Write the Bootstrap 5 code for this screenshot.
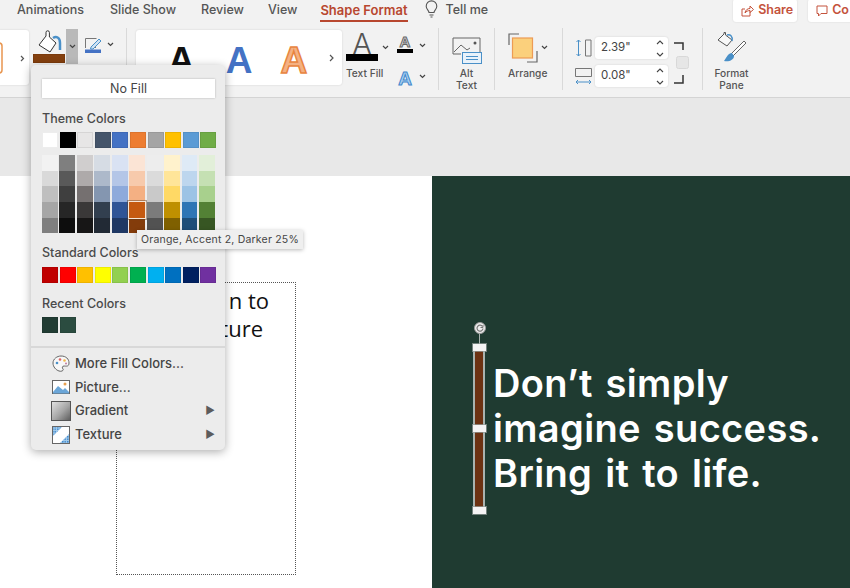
<!DOCTYPE html>
<html lang="en">
<head>
  <meta charset="UTF-8" />
  <title>Shape Format</title>
  <link href="https://cdn.jsdelivr.net/npm/bootstrap@5.3.0/dist/css/bootstrap.min.css" rel="stylesheet">
  <style>
    html, body { height: 100%; }
    body { background: #fff; font-family: "Inter", "Liberation Sans", sans-serif; color: #4a4a4a; overflow: hidden; }
    .app-shell { width: 850px; height: 588px; position: relative; overflow: hidden; }

    .top-chrome { background: #f2f2f2; height: 98px; border-bottom: 1px solid #d4d4d4; }
    .tab-row { height: 24px; font-size: 12.5px; font-weight: 500; color: #555; }
    .tab-row > * { flex-shrink: 0; }
    .tab-item { white-space: nowrap; line-height: 20px; }
    .tab-animations { margin-left: 17px; }
    .tab-slideshow { margin-left: 26px; }
    .tab-review { margin-left: 25px; }
    .tab-view { margin-left: 24px; }
    .tab-active { color: #b8472f; font-weight: 600; font-size: 13px; border-bottom: 2px solid #b8472f; height: 22px; margin-left: 23px; }
    .tab-bulb { margin-left: 17px; }
    .top-btn { background: #fff; color: #c4533c; font-weight: 600; font-size: 12.5px; height: 23px; border-radius: 3px; margin-top: -1px; box-shadow: 0 0 2px rgba(0,0,0,.12); padding-left: 8px; white-space: nowrap; }
    .top-btn svg { flex: none; }
    .btn-share { margin-left: 245px; width: 64px; }
    .btn-comment { margin-left: 11px; width: 60px; overflow: hidden; }

    .ribbon-row { height: 73px; position: relative; }
    .ribbon-row > * { flex-shrink: 0; }
    .rb-gallery { background: #fff; height: 55px; margin-top: 6px; border-radius: 3px; box-shadow: 0 0 2px rgba(0,0,0,.15); overflow: hidden; }
    .rb-gallery-a { width: 32px; margin-left: -3px; }
    .rb-gallery-b { width: 206px; margin-left: 9px; }
    .rb-sep { width: 1px; height: 62px; margin-top: 4px; background: #d9d9d9; }
    .rb-sep-pen { margin-left: 8px; }
    .rb-sep-lock { margin-left: 9px; }
    .rb-label { font-size: 10.2px; line-height: 12px; color: #555; font-weight: 500; text-align: center; }
    .rb-bucket { margin: 6px 0 0 4px; }
    .rb-split { width: 12px; height: 35px; margin-top: 5px; background: #b9b9b9; }
    .rb-pen { margin: 13px 0 0 6px; }
    .rb-input { width: 73px; height: 22px; background: #fff; border-radius: 3px; font-size: 11.5px; color: #444; padding-left: 6px; box-shadow: 0 0 2px rgba(0,0,0,.15); }
    .wordart { font-size: 37px; font-weight: 700; line-height: 1; font-family: "Liberation Sans", sans-serif; padding-top: 6px; }
    .wordart-a { margin-left: 32px; color: #111; }
    .wordart-b { margin-left: 31px; color: #4472c4; }
    .wordart-c { margin-left: 28px; color: #f4b183; -webkit-text-stroke: 1.5px #e8853f; }

    .text-fill { width: 32px; margin-left: 4px; }
    .text-fill-glyph { height: 25px; margin-top: 5px; font-size: 29px; line-height: 30px; color: #555; font-weight: 300; text-align: center; }
    .text-fill-bar { height: 7px; background: #000; }
    .text-fill-label { margin-top: 6px; white-space: nowrap; }
    .text-side { width: 60px; position: relative; }
    .side-chevron { position: absolute; }
    .chev-a { left: 4px; top: 21px; }
    .chev-b { left: 41px; top: 19px; }
    .chev-c { left: 41px; top: 50px; }
    .side-a { position: absolute; left: 19px; width: 16px; text-align: center; font-family: "Liberation Sans", sans-serif; font-weight: 700; line-height: 1; }
    .side-a-outline { top: 10px; font-size: 15px; color: #ddd; -webkit-text-stroke: 1px #666; }
    .side-a-bar { position: absolute; left: 19px; top: 25px; width: 16px; height: 4px; background: #000; }
    .side-a-blue { top: 45px; font-size: 19px; color: #a9d0f0; -webkit-text-stroke: 1px #3f87cc; }

    .alt-group { width: 55px; }
    .alt-icon { margin: 13px 0 0 13px; }
    .alt-label { margin-top: 3px; }
    .arrange-group { width: 67px; padding-left: 13px; }
    .arrange-icon { margin-top: 9px; }
    .arrange-label { margin-top: 4px; text-align: left; }
    .size-group { padding-left: 12px; margin-top: 13px; gap: 6px; }
    .size-row { gap: 3px; }
    .lock-icon { margin: 18px 0 0 5px; }
    .format-group { width: 57px; }
    .format-icon { margin: 8px 0 0 14px; }
    .format-label { margin-top: 3px; }

    .band { height: 78px; background: #e8e8e8; }
    .stage { height: 412px; }
    .stage-left { width: 432px; flex: none; background: #fff; }
    .stage-right { background: #1f3b31; position: relative; }
    .text-box { width: 180px; height: 293px; margin: 106px 0 0 116px; border: 1px dotted #555; color: #111; font-size: 22px; line-height: 28px; text-align: right; padding: 3px 26px 0 0; font-family: "Open Sans", sans-serif; }
    .text-box div + div { padding-right: 6px; }
    .slide-quote { color: #fff; font-size: 38px; line-height: 45px; font-weight: 600; padding: 185px 0 0 61px; white-space: nowrap; letter-spacing: .35px; word-spacing: 3px; }
    .bar-line { position: absolute; left: 41px; top: 170px; width: 12px; height: 164px; background: #6c3212; border: 2px solid #a9b3af; }
    .bar-stem { position: absolute; left: 47px; top: 156px; width: 1px; height: 14px; background: #aab4b0; }
    .bar-grip { position: absolute; left: 41px; width: 13px; height: 7px; background: #f4f4f4; box-shadow: 0 0 0 1px rgba(150,160,156,.7); }
    .grip-top { top: 168px; }
    .grip-mid { top: 249px; }
    .grip-bottom { top: 331px; }
    .bar-rotate { position: absolute; left: 42px; top: 146px; }

    .fill-menu { position: absolute; left: 31px; top: 65px; width: 194px; height: 385px; background: #ececec; border-radius: 5px; box-shadow: 0 2px 10px rgba(0,0,0,.32); padding: 14px 10px 0 11px; color: #444; font-size: 12.5px; z-index: 5; }
    .no-fill { height: 19px; width: 173px; background: #fff; text-align: center; line-height: 19px; box-shadow: 0 0 2px rgba(0,0,0,.25); }
    .menu-head { line-height: 16px; font-weight: 500; color: #4a4a4a; }
    .head-theme { margin-top: 13px; }
    .head-standard { margin-top: 12px; }
    .head-recent { margin-top: 13px; }
    .swatch-row { display: flex; gap: 1.6px; margin-top: 6px; }
    .swatch-tight { margin-top: 5px; }
    .swatch { width: 16px; height: 16px; flex: none; box-shadow: inset 0 0 0 1px rgba(0,0,0,.07); }
    .shade-grid { display: flex; gap: 1.6px; margin-top: 7px; }
    .shade-col { width: 16px; }
    .shade { height: 15.7px; }
    .shade-on { position: relative; outline: 1px solid #f5e6d8; z-index: 1; box-shadow: 0 0 0 2px rgba(90,60,30,.45); }
    .menu-rule { height: 2px; background: #d8d8d8; margin: 13px -10px 0 -11px; }
    .menu-list { margin-top: 4px; }
    .menu-item { height: 23.5px; display: flex; align-items: center; font-size: 13px; font-weight: 500; padding-left: 10px; position: relative; }
    .menu-item svg { flex: none; margin-right: 5px; }
    .menu-item svg.icon-wide { margin-left: -1px; margin-right: 4px; }
    .menu-caret { margin-left: auto; color: #5c5c5c; font-size: 10.5px; }

    .color-tip { position: absolute; left: 137px; top: 230px; width: 166px; height: 19px; background: #efefef; font-size: 10.5px; line-height: 19px; text-align: center; color: #444; box-shadow: 0 1px 4px rgba(0,0,0,.28); z-index: 6; white-space: nowrap; letter-spacing: .2px; }
  </style>
</head>
<body>
<div class="app-shell">
  <div class="top-chrome">
    <div class="tab-row d-flex">
      <span class="tab-item tab-animations">Animations</span>
      <span class="tab-item tab-slideshow">Slide Show</span>
      <span class="tab-item tab-review">Review</span>
      <span class="tab-item tab-view">View</span>
      <span class="tab-item tab-active">Shape Format</span>
      <svg class="tab-bulb" width="13" height="18" viewBox="0 0 13 18" fill="none" stroke="#555" stroke-width="1.1"><path d="M4 12.500c0-2-2.800-3-2.800-6.300a5.300 5.300 0 0 1 10.600 0c0 3.300-2.800 4.300-2.800 6.300z"/><path d="M4.500 15h4M5.500 17h2"/></svg>
      <span class="tab-item ms-2">Tell me</span>
      <span class="top-btn btn-share d-flex align-items-center gap-1">
        <svg width="13" height="12" viewBox="0 0 13 12" fill="none" stroke="#c4533c" stroke-width="1"><path d="M9 6.500V11H1V4h3M4 8c.4-3 2.500-4.500 5-4.500V1l3.500 3.500L9 7.500V5.500C7 5.500 5 6.500 4 8z"/></svg>Share
      </span>
      <span class="top-btn btn-comment d-flex align-items-center gap-1">
        <svg width="12" height="12" viewBox="0 0 12 12" fill="none" stroke="#c4533c" stroke-width="1"><path d="M1 1h10v7.500H5L2.500 11V8.500H1z"/></svg>Co
      </span>
    </div>
    <div class="ribbon-row d-flex">
      <div class="rb-gallery rb-gallery-a">
        <svg width="32" height="55" viewBox="0 0 32 55" fill="none"><rect x="-10" y="13" width="15" height="30" rx="3" stroke="#e8954f" stroke-width="1.500"/><path d="M24 26l2.500 2.500L24 31" stroke="#555" stroke-width="1.200"/></svg>
      </div>
      <!-- fill bucket -->
      <svg class="rb-bucket" width="33" height="34" viewBox="0 0 33 34" fill="none">
        <path d="M6 15l7-9V2.500a1.700 1.700 0 0 1 3.400 0V7L23 13l-6 9z" fill="#fff" stroke="#333" stroke-width="1"/>
        <path d="M20 8c3-2 7-1 7 5v7" stroke="#4a90c8" stroke-width="2.500"/>
        <rect x=".5" y="24.500" width="31" height="8" fill="#84400f" stroke="#7a3a0c"/>
      </svg>
      <div class="rb-split d-flex align-items-center justify-content-center">
        <svg width="7" height="5" viewBox="0 0 7 5" fill="none" stroke="#444" stroke-width="1.200"><path d="M1 1l2.500 2.500L6 1"/></svg>
      </div>
      <svg class="rb-pen" width="34" height="17" viewBox="0 0 34 17" fill="none">
        <path d="M1.500 11V1.500h11M12 10.500H8" stroke="#777"/>
        <path d="M7 10l8-8 2 2-8 8H6.500z" fill="#cfe2f3" stroke="#4a90c8"/>
        <rect x="1" y="12.500" width="16" height="3.500" fill="#4472c4"/>
        <path d="M24 6l2.500 2.500L29 6" stroke="#444" stroke-width="1.200"/>
      </svg>
      <div class="rb-sep rb-sep-pen"></div>
      <div class="rb-gallery rb-gallery-b d-flex align-items-center">
        <span class="wordart wordart-a">A</span>
        <span class="wordart wordart-b">A</span>
        <span class="wordart wordart-c">A</span>
        <svg class="ms-auto me-2" width="5" height="8" viewBox="0 0 5 8" fill="none" stroke="#555" stroke-width="1.200"><path d="M1 1l3 3-3 3"/></svg>
      </div>
      <div class="text-fill">
        <div class="text-fill-glyph">A</div>
        <div class="text-fill-bar"></div>
        <div class="rb-label text-fill-label">Text Fill</div>
      </div>
      <div class="text-side">
        <svg class="side-chevron chev-a" width="7" height="5" viewBox="0 0 7 5" fill="none" stroke="#444" stroke-width="1.200"><path d="M1 1l2.500 2.500L6 1"/></svg>
        <span class="side-a side-a-outline">A</span>
        <span class="side-a-bar"></span>
        <svg class="side-chevron chev-b" width="7" height="5" viewBox="0 0 7 5" fill="none" stroke="#444" stroke-width="1.200"><path d="M1 1l2.500 2.500L6 1"/></svg>
        <span class="side-a side-a-blue">A</span>
        <svg class="side-chevron chev-c" width="7" height="5" viewBox="0 0 7 5" fill="none" stroke="#444" stroke-width="1.200"><path d="M1 1l2.500 2.500L6 1"/></svg>
      </div>
      <div class="rb-sep"></div>
      <div class="alt-group">
        <svg class="alt-icon d-block" width="31" height="27" viewBox="0 0 31 27" fill="none">
          <path d="M9 17H1V1h27v15" stroke="#666"/>
          <path d="M2 15l7-7 6 5 3-2" stroke="#666"/><circle cx="23" cy="6" r="1.500" fill="#555"/>
          <rect x="10.500" y="15.500" width="19" height="11" fill="#e9f2fa" stroke="#4a90c8"/>
          <path d="M14 19.500h12M14 22.500h12" stroke="#4a90c8"/>
        </svg>
        <div class="rb-label alt-label">Alt<br>Text</div>
      </div>
      <div class="rb-sep"></div>
      <div class="arrange-group">
        <svg class="arrange-icon d-block" width="42" height="30" viewBox="0 0 42 30" fill="none">
          <path d="M1 12V1h10M29 18v11H19" stroke="#666" stroke-width="1.200"/>
          <rect x="4.500" y="5" width="20" height="20" fill="#fbd07c" stroke="#ed9b54" stroke-width="1.200"/>
          <path d="M34 13l2.500 2.500L39 13" stroke="#444" stroke-width="1.200"/>
        </svg>
        <div class="rb-label arrange-label">Arrange</div>
      </div>
      <div class="rb-sep"></div>
      <div class="size-group d-flex flex-column">
        <div class="size-row d-flex align-items-center">
          <svg width="17" height="18" viewBox="0 0 17 18" fill="none"><path d="M3.500 1v16M1.500 3l2-2 2 2M1.500 15l2 2 2-2" stroke="#4a90c8"/><path d="M10.500 1h5.500v16h-5.500z" stroke="#777"/></svg>
          <div class="rb-input d-flex align-items-center justify-content-between">2.39"<svg class="me-1" width="8" height="19" viewBox="0 0 8 19" fill="none" stroke="#444" stroke-width="1.100"><path d="M1 5l3-3 3 3M1 14l3 3 3-3"/></svg></div>
        </div>
        <div class="size-row d-flex align-items-center">
          <svg width="17" height="18" viewBox="0 0 17 18" fill="none"><path d="M.5 1.500h16v8H.5z" stroke="#777"/><path d="M1 15h15M3 13l-2 2 2 2M14 13l2 2-2 2" stroke="#4a90c8"/></svg>
          <div class="rb-input d-flex align-items-center justify-content-between">0.08"<svg class="me-1" width="8" height="19" viewBox="0 0 8 19" fill="none" stroke="#444" stroke-width="1.100"><path d="M1 5l3-3 3 3M1 14l3 3 3-3"/></svg></div>
        </div>
      </div>
      <svg class="lock-icon" width="20" height="42" viewBox="0 0 20 42" fill="none">
        <path d="M1 1h9v7M10 33v8H1" stroke="#333" stroke-width="1.500"/>
        <rect x="3.500" y="14.500" width="12" height="12" rx="2" fill="#e6e6e6" stroke="#d8d8d8"/>
      </svg>
      <div class="rb-sep rb-sep-lock"></div>
      <div class="format-group">
        <svg class="format-icon d-block" width="32" height="32" viewBox="0 0 32 32" fill="none">
          <path d="M1 8l6-6V0.500h1.500V3L15 8l-5 6z" stroke="#555" fill="#f8f8f8"/>
          <path d="M10 3c3-1 6 1 5 6" stroke="#4a90c8" stroke-width="1.500"/>
          <path d="M29 11L16 24l-2-2L27 9z" fill="#fff" stroke="#666"/>
          <path d="M15 21c-4 0-5 4-8 8 5 1 10-1 10-5z" fill="#4a90c8"/>
        </svg>
        <div class="rb-label format-label">Format<br>Pane</div>
      </div>
    </div>
  </div>
  <div class="band"></div>
  <div class="stage d-flex">
    <div class="stage-left">
      <div class="text-box"><div>n to</div><div>ture</div></div>
    </div>
    <div class="stage-right flex-grow-1">
      <div class="bar-stem"></div>
      <svg class="bar-rotate" width="12" height="12" viewBox="0 0 12 12" fill="none"><circle cx="6" cy="6" r="5.500" fill="#eee" stroke="#999"/><path d="M8.500 4.500A3 3 0 1 0 9 6.500" stroke="#777" stroke-width="1.200"/><path d="M9 3v2.500H6.500" stroke="#777"/></svg>
      <div class="bar-line"></div>
      <div class="bar-grip grip-top"></div>
      <div class="bar-grip grip-mid"></div>
      <div class="bar-grip grip-bottom"></div>
      <div class="slide-quote">Don’t simply<br>imagine success.<br>Bring it to life.</div>
    </div>
  </div>

  <div class="fill-menu">
    <div class="no-fill">No Fill</div>
    <div class="menu-head head-theme">Theme Colors</div>
    <div class="swatch-row swatch-tight" id="themeRow"></div>
    <div class="shade-grid" id="shadeGrid"></div>
    <div class="menu-head head-standard">Standard Colors</div>
    <div class="swatch-row" id="standardRow"></div>
    <div class="menu-head head-recent">Recent Colors</div>
    <div class="swatch-row swatch-tight" id="recentRow"></div>
    <div class="menu-rule"></div>
    <div class="menu-list">
      <div class="menu-item">
        <svg width="18" height="18" viewBox="0 0 18 18" fill="none"><path d="M9 1c5 0 8 3 8 7s-3 3-5 3-2 2-1 3-1 3-4 2S1 12 1 8s4-7 8-7z" fill="#f7f7f7" stroke="#666"/><circle cx="5" cy="8" r="1.300" fill="#4a90c8"/><circle cx="8" cy="4.500" r="1.300" fill="#e06666"/><circle cx="12.500" cy="5.500" r="1.300" fill="#f1b84b"/><circle cx="14" cy="8.500" r="1" fill="#c27ba0"/></svg>
        More Fill Colors...
      </div>
      <div class="menu-item">
        <svg width="18" height="15" viewBox="0 0 18 15" fill="none"><rect x=".5" y=".5" width="17" height="13" fill="#fff" stroke="#666"/><path d="M1 12l5-6 5 4 2-2 4 4v1.500H1z" fill="#6ba6d8"/><circle cx="13" cy="4" r="1.500" fill="#e8a04f"/></svg>
        Picture...
      </div>
      <div class="menu-item">
        <svg class="icon-wide" width="20" height="20" viewBox="0 0 20 20"><defs><linearGradient id="gr1" x1="0" y1="0" x2="1" y2="1"><stop offset="0" stop-color="#e4e4e4"/><stop offset=".55" stop-color="#a5a5a5"/><stop offset="1" stop-color="#5a5a5a"/></linearGradient></defs><rect x=".5" y=".5" width="19" height="19" fill="url(#gr1)" stroke="#555"/></svg>
        Gradient<span class="menu-caret">▶</span>
      </div>
      <div class="menu-item">
        <svg width="18" height="18" viewBox="0 0 18 18" fill="none"><defs><pattern id="dots1" width="2.500" height="2.500" patternUnits="userSpaceOnUse"><rect width="2.500" height="2.500" fill="#a6cdec"/><rect width="1.500" height="1.500" fill="#3f87cc"/></pattern></defs><rect x=".5" y=".5" width="17" height="17" fill="#fff" stroke="#666"/><path d="M1 1h9L1 10zM17 8v9H8z" fill="url(#dots1)"/></svg>
        Texture<span class="menu-caret">▶</span>
      </div>
    </div>
  </div>
  <div class="color-tip">Orange, Accent 2, Darker 25%</div>
</div>
<script>
  const themeColors = ['#ffffff','#000000','#e7e6e6','#44546a','#4472c4','#ed7d31','#a5a5a5','#ffc000','#5b9bd5','#70ad47'];
  const standardColors = ['#c00000','#ff0000','#ffc000','#ffff00','#92d050','#00b050','#00b0f0','#0070c0','#002060','#7030a0'];
  const recentColors = ['#213c33','#2b4c40'];
  const shades = [
    ['#f2f2f2','#d9d9d9','#bfbfbf','#a6a6a6','#7f7f7f'],
    ['#7f7f7f','#595959','#3f3f3f','#262626','#0d0d0d'],
    ['#d0cece','#aeaaaa','#757070','#3a3838','#171616'],
    ['#d6dce4','#adb9ca','#8496b0','#323f4f','#222a35'],
    ['#d9e2f3','#b4c6e7','#8eaadb','#2f5496','#1f3864'],
    ['#fbe4d5','#f7caac','#f4b083','#c55a11','#833c0b'],
    ['#ededed','#dbdbdb','#c9c9c9','#7b7b7b','#525252'],
    ['#fff2cc','#ffe599','#ffd965','#bf9000','#7f6000'],
    ['#deeaf6','#bdd6ee','#9cc3e5','#2e75b5','#1e4e79'],
    ['#e2efd9','#c5e0b3','#a8d08d','#538135','#375623']
  ];

  function fillRow(id, colors) {
    const row = document.getElementById(id);
    colors.forEach(c => {
      const el = document.createElement('div');
      el.className = 'swatch';
      el.style.backgroundColor = c;
      row.appendChild(el);
    });
  }

  fillRow('themeRow', themeColors);
  fillRow('standardRow', standardColors);
  fillRow('recentRow', recentColors);

  const grid = document.getElementById('shadeGrid');
  shades.forEach((col, i) => {
    const colEl = document.createElement('div');
    colEl.className = 'shade-col';
    col.forEach((c, j) => {
      const s = document.createElement('div');
      s.className = 'shade';
      if (i === 5 && j === 3) s.classList.add('shade-on');
      s.style.backgroundColor = c;
      colEl.appendChild(s);
    });
    grid.appendChild(colEl);
  });
</script>
<script src="https://cdn.jsdelivr.net/npm/bootstrap@5.3.0/dist/js/bootstrap.bundle.min.js"></script>
</body>
</html>
